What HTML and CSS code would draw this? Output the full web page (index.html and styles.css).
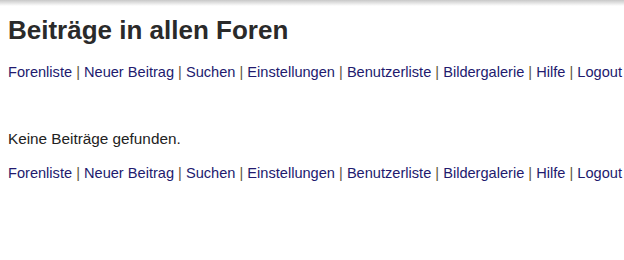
FILE: index.html
```html
<!DOCTYPE html>
<html lang="de">
<head>
  <meta charset="UTF-8">
  <title>Beiträge in allen Foren</title>
  <link rel="stylesheet" href="styles.css">
</head>
<body>
  <div class="shadow"></div>
  <div class="page">
    <h1>Beiträge in allen Foren</h1>
    <p class="nav">
      <a href="#">Forenliste</a> | <a href="#">Neuer Beitrag</a> | <a href="#">Suchen</a> | <a href="#">Einstellungen</a> | <a href="#">Benutzerliste</a> | <a href="#">Bildergalerie</a> | <a href="#">Hilfe</a> | <a href="#">Logout</a>
    </p>
    <p class="empty">Keine Beiträge gefunden.</p>
    <p class="nav">
      <a href="#">Forenliste</a> | <a href="#">Neuer Beitrag</a> | <a href="#">Suchen</a> | <a href="#">Einstellungen</a> | <a href="#">Benutzerliste</a> | <a href="#">Bildergalerie</a> | <a href="#">Hilfe</a> | <a href="#">Logout</a>
    </p>
  </div>
</body>
</html>
```

FILE: styles.css
```css
body {
  margin: 0;
  font-family: "Liberation Sans", Arial, sans-serif;
  font-size: 14px;
  color: #222;
  background: #fff;
}

.shadow {
  height: 6px;
  background: linear-gradient(#c8c8c8, #fff);
}

.page {
  padding: 0 8px;
}

h1 {
  margin: 10px 0 0;
  font-size: 26px;
  line-height: 28px;
  color: #2a2a2a;
}

.nav {
  margin: 18px 0 0;
  font-size: 14.6px;
  line-height: 20px;
  color: #5e5540;
  white-space: nowrap;
}

.nav a {
  color: #221a6e;
  text-decoration: none;
}

.empty {
  margin: 47px 0 0;
  font-size: 15.3px;
  line-height: 20px;
}

.empty + .nav {
  margin-top: 14px;
}
```
